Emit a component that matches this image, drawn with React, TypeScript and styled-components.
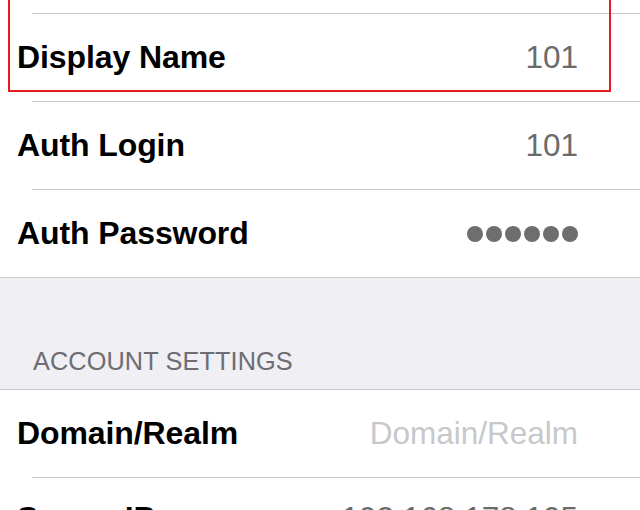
import React from "react";
import styled, { createGlobalStyle } from "styled-components";

const Global = createGlobalStyle`
  html, body { margin: 0; padding: 0; background: #ffffff; }
  body { font-family: "Liberation Sans", Arial, sans-serif; overflow: hidden; }
`;

const Page = styled.div`
  position: relative;
  width: 640px;
  height: 510px;
  overflow: hidden;
  background: #ffffff;
`;

const Stub = styled.div`
  height: 13px;
`;

const Separator = styled.div<{ $full?: boolean }>`
  height: 1px;
  background: #c8c7cc;
  margin-left: ${(p) => (p.$full ? "0" : "32px")};
`;

const Row = styled.div<{ $height?: number }>`
  height: ${(p) => p.$height ?? 87}px;
  display: flex;
  align-items: center;
  justify-content: space-between;
  padding: 0 62px 0 17px;
`;

const Label = styled.span`
  font-family: "Liberation Sans", Arial, sans-serif;
  font-weight: 700;
  font-size: 32px;
  letter-spacing: -0.1px;
  color: #000000;
`;

const Value = styled.span<{ $placeholder?: boolean }>`
  font-family: "Liberation Sans", Arial, sans-serif;
  font-size: 31.5px;
  color: ${(p) => (p.$placeholder ? "#c7c7cc" : "#6b6b6b")};
`;

const Dots = styled.div`
  display: flex;
  gap: 3px;
`;

const Dot = styled.span`
  width: 16px;
  height: 16px;
  border-radius: 50%;
  background: #6e6e6e;
`;

const SectionHeader = styled.div`
  height: 111px;
  background: #efeff4;
  display: flex;
  align-items: flex-end;
  padding: 0 0 13px 33px;
  box-sizing: border-box;
`;

const HeaderText = styled.span`
  font-family: "Liberation Sans", Arial, sans-serif;
  font-size: 25.3px;
  line-height: 30px;
  color: #6d6d72;
  letter-spacing: 0.1px;
`;

const Highlight = styled.div`
  position: absolute;
  left: 8px;
  top: -6px;
  width: 603px;
  height: 98px;
  box-sizing: border-box;
  border: 2px solid #e31b23;
  pointer-events: none;
`;

export default function App() {
  return (
    <Page>
      <Global />
      <Stub />
      <Separator />
      <Row>
        <Label>Display Name</Label>
        <Value>101</Value>
      </Row>
      <Separator />
      <Row>
        <Label>Auth Login</Label>
        <Value>101</Value>
      </Row>
      <Separator />
      <Row>
        <Label>Auth Password</Label>
        <Dots>
          {Array.from({ length: 6 }).map((_, i) => (
            <Dot key={i} />
          ))}
        </Dots>
      </Row>
      <Separator $full />
      <SectionHeader>
        <HeaderText>ACCOUNT SETTINGS</HeaderText>
      </SectionHeader>
      <Separator $full />
      <Row>
        <Label>Domain/Realm</Label>
        <Value $placeholder>Domain/Realm</Value>
      </Row>
      <Separator />
      <Row $height={80}>
        <Label>Server IP</Label>
        <Value>192.168.178.105</Value>
      </Row>
      <Highlight />
    </Page>
  );
}
